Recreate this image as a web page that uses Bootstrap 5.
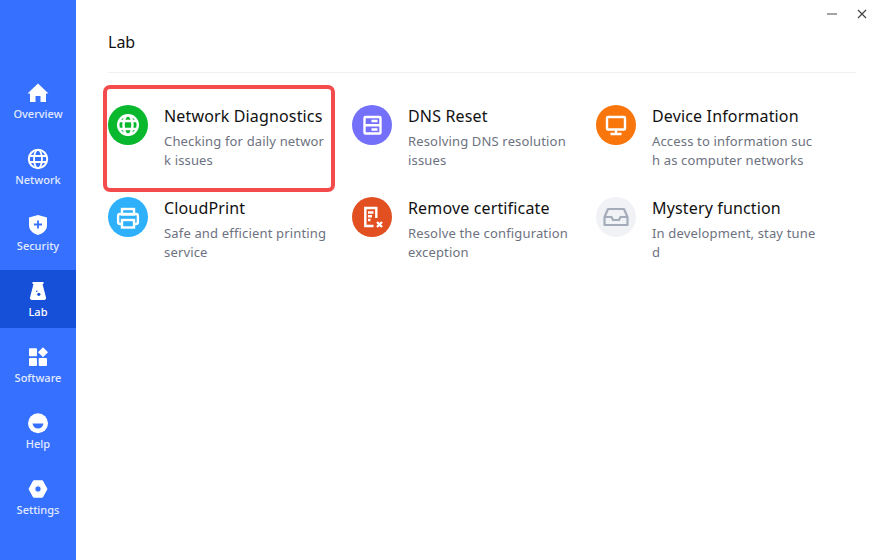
<!DOCTYPE html>
<html lang="en">
<head>
<meta charset="utf-8">
<title>Lab</title>
<link href="https://cdn.jsdelivr.net/npm/bootstrap@5.3.0/dist/css/bootstrap.min.css" rel="stylesheet">
<style>
html,body{height:100%;margin:0;overflow:hidden}
body{font-family:"Noto Sans","Liberation Sans",sans-serif;background:#fff;color:#111}
.shell{height:560px}
.rail{width:76px;background:#3670ff;padding-top:72px;gap:8px}
.rail-item{height:58px;color:#e3ebff;font-size:11px;line-height:14px;font-weight:500;padding-top:10px;text-decoration:none}
.rail-item.on{background:#164fd8;color:#fff}
.rail-item svg{width:22px;height:22px;display:block;margin-bottom:3px}
.stage{padding:0 32px}
.head{height:73px;border-bottom:1px solid #f0f1f3;font-size:16px;line-height:22px;padding-top:31px}
.tiles{display:grid;grid-template-columns:repeat(3,244px);grid-auto-rows:92px;padding-top:32px}
.tile{gap:16px}
.disc{width:40px;height:40px;flex:none}
.disc svg{width:40px;height:40px;display:block}
.tile-name{font-size:16px;line-height:22px;letter-spacing:.15px;color:#111}
.tile-desc{font-size:13px;line-height:19px;width:164px;letter-spacing:.16px;color:#6d7280;word-break:break-all;margin-top:5px}
.mark-box{position:absolute;left:-5px;top:-20px;width:232px;height:107px;border:4px solid #f44c4c;border-radius:7px;pointer-events:none}
.win{position:absolute;top:8px;right:20px;gap:18px}
.win svg{width:12px;height:12px;display:block}
.ln{fill:none;stroke:#fff;stroke-width:2.4}
</style>
</head>
<body>
<div class="shell d-flex">
  <nav class="rail d-flex flex-column flex-shrink-0">
    <a class="rail-item d-flex flex-column align-items-center" href="#">
      <svg viewBox="0 0 22 22"><path fill="#fff" d="M11 1.500 21.500 11.500H19v8.500h-5.500v-6h-5v6H3v-8.500H.5z"/></svg>Overview</a>
    <a class="rail-item d-flex flex-column align-items-center" href="#">
      <svg viewBox="0 0 22 22"><circle cx="11" cy="11" r="9.200" fill="none" stroke="#fff" stroke-width="2"/><ellipse cx="11" cy="11" rx="4" ry="9.200" fill="none" stroke="#fff" stroke-width="1.800"/><path stroke="#fff" stroke-width="1.800" d="M2 8h18M2 14h18"/></svg>Network</a>
    <a class="rail-item d-flex flex-column align-items-center" href="#">
      <svg viewBox="0 0 22 22"><path fill="#fff" d="M11 1 20 3.600V11c0 5-3.600 8.300-9 10C5.600 19.300 2 16 2 11V3.600z"/><path stroke="#3670ff" stroke-width="1.800" d="M7 10.500h8M11 6.500v8"/></svg>Security</a>
    <a class="rail-item on d-flex flex-column align-items-center" href="#">
      <svg viewBox="0 0 22 22"><path fill="#fff" d="M5.500 2h11v2h-1l3.500 13.500c.3 1.500-.5 2.500-2 2.500H5c-1.500 0-2.300-1-2-2.500L6.500 4h-1z"/><circle cx="11.800" cy="14.300" r="1.600" fill="#164fd8"/><circle cx="9.700" cy="11.300" r=".8" fill="#164fd8"/></svg>Lab</a>
    <a class="rail-item d-flex flex-column align-items-center" href="#">
      <svg viewBox="0 0 22 22"><rect x="2" y="2.300" width="8" height="8" rx="1" fill="#fff"/><rect x="2" y="12" width="8" height="8" rx="1" fill="#fff"/><rect x="11.700" y="12" width="8.300" height="8" rx="1" fill="#fff"/><path fill="#fff" d="M16 1.300 21 6.300l-5 5-5-5z"/></svg>Software</a>
    <a class="rail-item d-flex flex-column align-items-center" href="#">
      <svg viewBox="0 0 22 22"><circle cx="11" cy="11.300" r="10" fill="#fff"/><path fill="#3670ff" d="M5.500 11.500h11c-.4 3-2.700 5-5.500 5s-5.100-2-5.500-5z"/></svg>Help</a>
    <a class="rail-item d-flex flex-column align-items-center" href="#">
      <svg viewBox="0 0 22 22"><path fill="#fff" stroke="#fff" stroke-linejoin="round" fill-rule="evenodd" d="M6.500 2.800h9L20 11l-4.500 8.200h-9L2 11zM11 7.800a3.200 3.200 0 1 0 0 6.400 3.200 3.200 0 0 0 0-6.400z"/></svg>Settings</a>
  </nav>
  <main class="stage flex-grow-1 position-relative">
    <div class="head">Lab</div>
    <div class="tiles">
      <div class="tile d-flex position-relative">
        <div class="disc rounded-circle" style="background:#09b82c"><svg viewBox="0 0 40 40"><circle class="ln" cx="20" cy="20" r="9.800"/><ellipse class="ln" cx="20" cy="20" rx="4.500" ry="9.800"/><path class="ln" d="M11 16h18M11 24h18"/></svg></div>
        <div><div class="tile-name">Network Diagnostics</div><div class="tile-desc">Checking for daily network issues</div></div>
        <div class="mark-box"></div>
      </div>
      <div class="tile d-flex">
        <div class="disc rounded-circle" style="background:#7470fa"><svg viewBox="0 0 40 40"><rect class="ln" x="12.500" y="12" width="16" height="16.500" rx="1"/><path class="ln" d="M12.500 20.200h16M19.500 16h6M19.500 24.500h6"/></svg></div>
        <div><div class="tile-name">DNS Reset</div><div class="tile-desc">Resolving DNS resolution issues</div></div>
      </div>
      <div class="tile d-flex">
        <div class="disc rounded-circle" style="background:#f8760c"><svg viewBox="0 0 40 40"><rect class="ln" x="11" y="12" width="18" height="12.500" rx="1"/><path class="ln" d="M20 25v4M14.500 29h11"/></svg></div>
        <div><div class="tile-name">Device Information</div><div class="tile-desc">Access to information such as computer networks</div></div>
      </div>
      <div class="tile d-flex">
        <div class="disc rounded-circle" style="background:#2eb0fa"><svg viewBox="0 0 40 40"><rect class="ln" x="14" y="12" width="12" height="5.500"/><rect class="ln" x="10.100" y="17" width="19.800" height="10" rx="2"/><rect x="14" y="23" width="12" height="7.500" fill="#2eb0fa" stroke="#fff" stroke-width="2.400"/></svg></div>
        <div><div class="tile-name">CloudPrint</div><div class="tile-desc">Safe and efficient printing service</div></div>
      </div>
      <div class="tile d-flex">
        <div class="disc rounded-circle" style="background:#e24f20"><svg viewBox="0 0 40 40"><path class="ln" d="M21.500 29H13.300V11h11v10"/><path class="ln" d="M16 15.500h5.500M16 19.300h4M16 23h2.500"/><path class="ln" d="m25 25 5 5M30 25l-5 5"/></svg></div>
        <div><div class="tile-name">Remove certificate</div><div class="tile-desc">Resolve the configuration exception</div></div>
      </div>
      <div class="tile d-flex">
        <div class="disc rounded-circle" style="background:#f1f2f5"><svg viewBox="0 0 40 40"><path fill="none" stroke="#a4abb9" stroke-width="2.200" stroke-linejoin="round" d="M12 12h16l3.500 8v8h-23v-8zM8.500 20h7l1.500 3h6l1.500-3h7"/></svg></div>
        <div><div class="tile-name">Mystery function</div><div class="tile-desc">In development, stay tuned</div></div>
      </div>
    </div>
    <div class="win d-flex align-items-center">
      <svg viewBox="0 0 12 12"><path stroke="#666" stroke-width="1.200" d="M1 6h10"/></svg>
      <svg viewBox="0 0 12 12"><path stroke="#444" stroke-width="1.200" d="m2 2 8 8M10 2l-8 8"/></svg>
    </div>
  </main>
</div>
<script src="https://cdn.jsdelivr.net/npm/bootstrap@5.3.0/dist/js/bootstrap.bundle.min.js"></script>
</body>
</html>
